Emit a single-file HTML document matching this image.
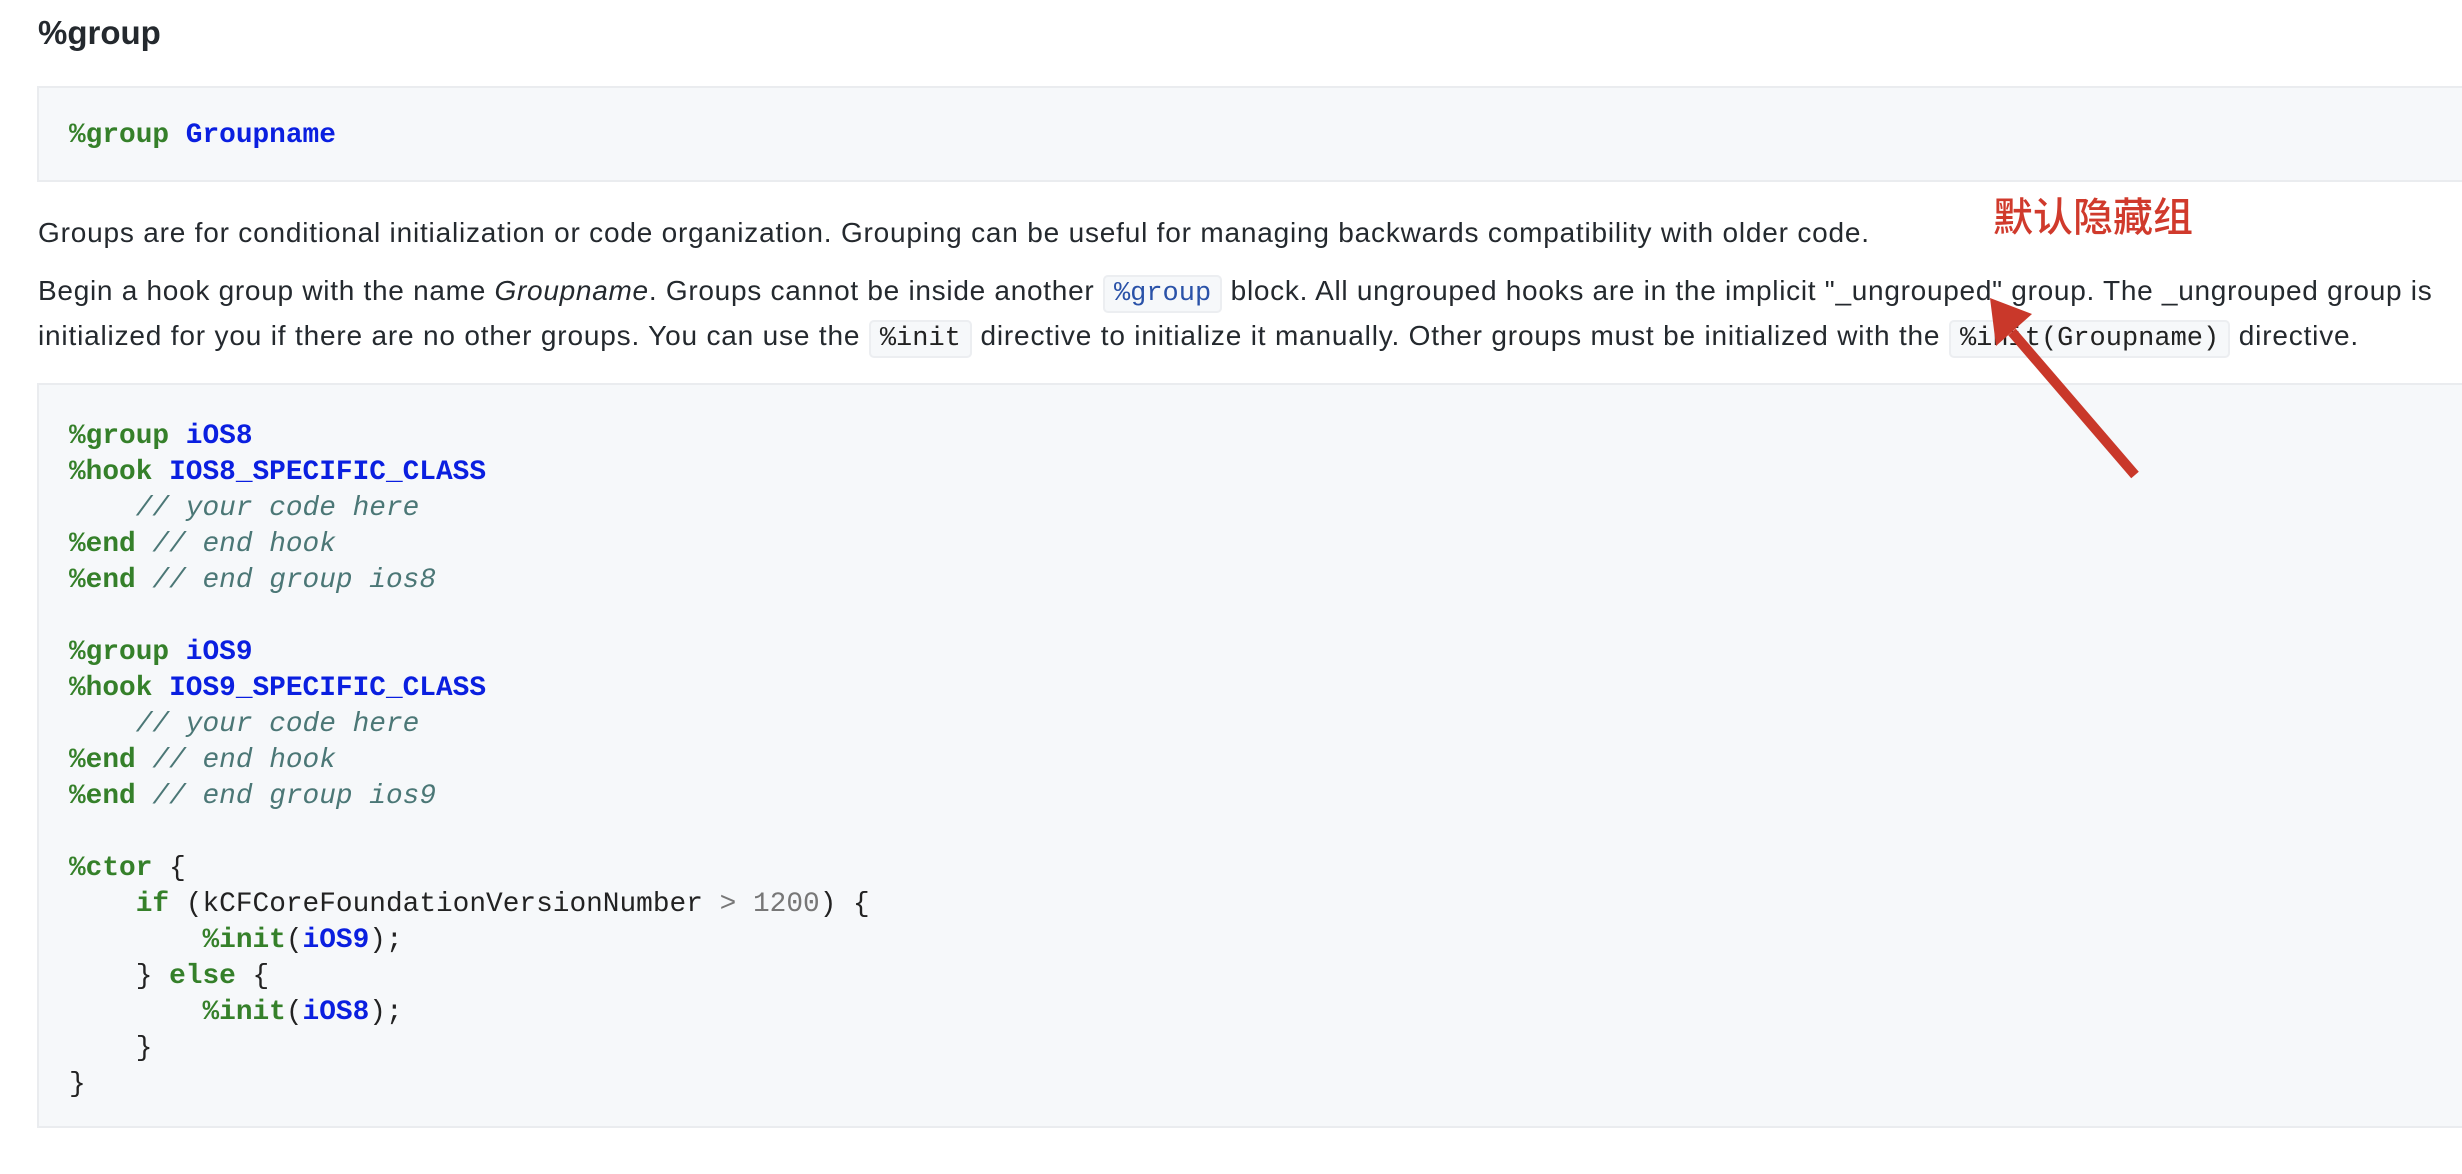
<!DOCTYPE html>
<html><head><meta charset="utf-8"><style>
html,body{margin:0;padding:0;background:#fff;width:2462px;height:1174px;overflow:hidden;position:relative}
.sans{font-family:"Liberation Sans",Arial,sans-serif;color:#24292e}
h2{position:absolute;left:38px;top:11px;margin:0;font-size:33px;letter-spacing:0;font-weight:bold;line-height:44px;color:#111}
.box{position:absolute;left:37px;right:-10px;background:#f6f8fa;border:2px solid #eaecef;}
pre{margin:0;font-family:"Liberation Mono",monospace;font-size:27.8px;line-height:36px;color:#222;white-space:pre}
.k{color:#35802a;font-weight:bold}
.b{color:#0a1fe0;font-weight:bold}
.c{color:#4b7776;font-style:italic}
.n{color:#777}
.p{position:absolute;left:38px;font-size:28px;letter-spacing:0.8px;white-space:nowrap;line-height:45px}
code{font-family:"Liberation Mono",monospace;font-size:27px;letter-spacing:0;background:#f6f8fa;border:2px solid #eceef1;border-radius:5px;padding:2px 9px;color:#222}
</style></head><body>
<h2 class="sans">%group</h2>
<div class="box" style="top:86px;height:92px"><pre style="position:absolute;left:30px;top:30px"><span class="k">%group</span> <span class="b">Groupname</span></pre></div>
<div class="p sans" style="top:210px">Groups are for conditional initialization or code organization. Grouping can be useful for managing backwards compatibility with older code.</div>
<div class="p sans" style="top:268px;letter-spacing:0.72px">Begin a hook group with the name <i>Groupname</i>. Groups cannot be inside another <code style="color:#2a52a8">%group</code> block. All ungrouped hooks are in the implicit "_ungrouped" group. The _ungrouped group is</div>
<div class="p sans" style="top:313px;letter-spacing:0.82px">initialized for you if there are no other groups. You can use the <code>%init</code> directive to initialize it manually. Other groups must be initialized with the <code>%init(Groupname)</code> directive.</div>
<div class="box" style="top:383px;height:741px"><pre style="position:absolute;left:30px;top:34px"><span class="k">%group</span> <span class="b">iOS8</span>
<span class="k">%hook</span> <span class="b">IOS8_SPECIFIC_CLASS</span>
    <span class="c">// your code here</span>
<span class="k">%end</span> <span class="c">// end hook</span>
<span class="k">%end</span> <span class="c">// end group ios8</span>

<span class="k">%group</span> <span class="b">iOS9</span>
<span class="k">%hook</span> <span class="b">IOS9_SPECIFIC_CLASS</span>
    <span class="c">// your code here</span>
<span class="k">%end</span> <span class="c">// end hook</span>
<span class="k">%end</span> <span class="c">// end group ios9</span>

<span class="k">%ctor</span> {
    <span class="k">if</span> (kCFCoreFoundationVersionNumber <span class="n">&gt;</span> <span class="n">1200</span>) {
        <span class="k">%init</span>(<span class="b">iOS9</span>);
    } <span class="k">else</span> {
        <span class="k">%init</span>(<span class="b">iOS8</span>);
    }
}</pre></div>
<div style="position:absolute;left:1993px;top:193px;font-family:'Liberation Sans','Noto Sans CJK SC',sans-serif;font-size:40px;line-height:50px;color:#d03a2c;font-weight:500">默认隐藏组</div>
<svg style="position:absolute;left:0;top:0" width="2462" height="1174">
<line x1="2135" y1="475" x2="2012" y2="332" stroke="#c9382a" stroke-width="10" stroke-linecap="butt"/>
<polygon points="1990,298 2032,314 1996,346" fill="#c9382a"/>
</svg>
</body></html>
